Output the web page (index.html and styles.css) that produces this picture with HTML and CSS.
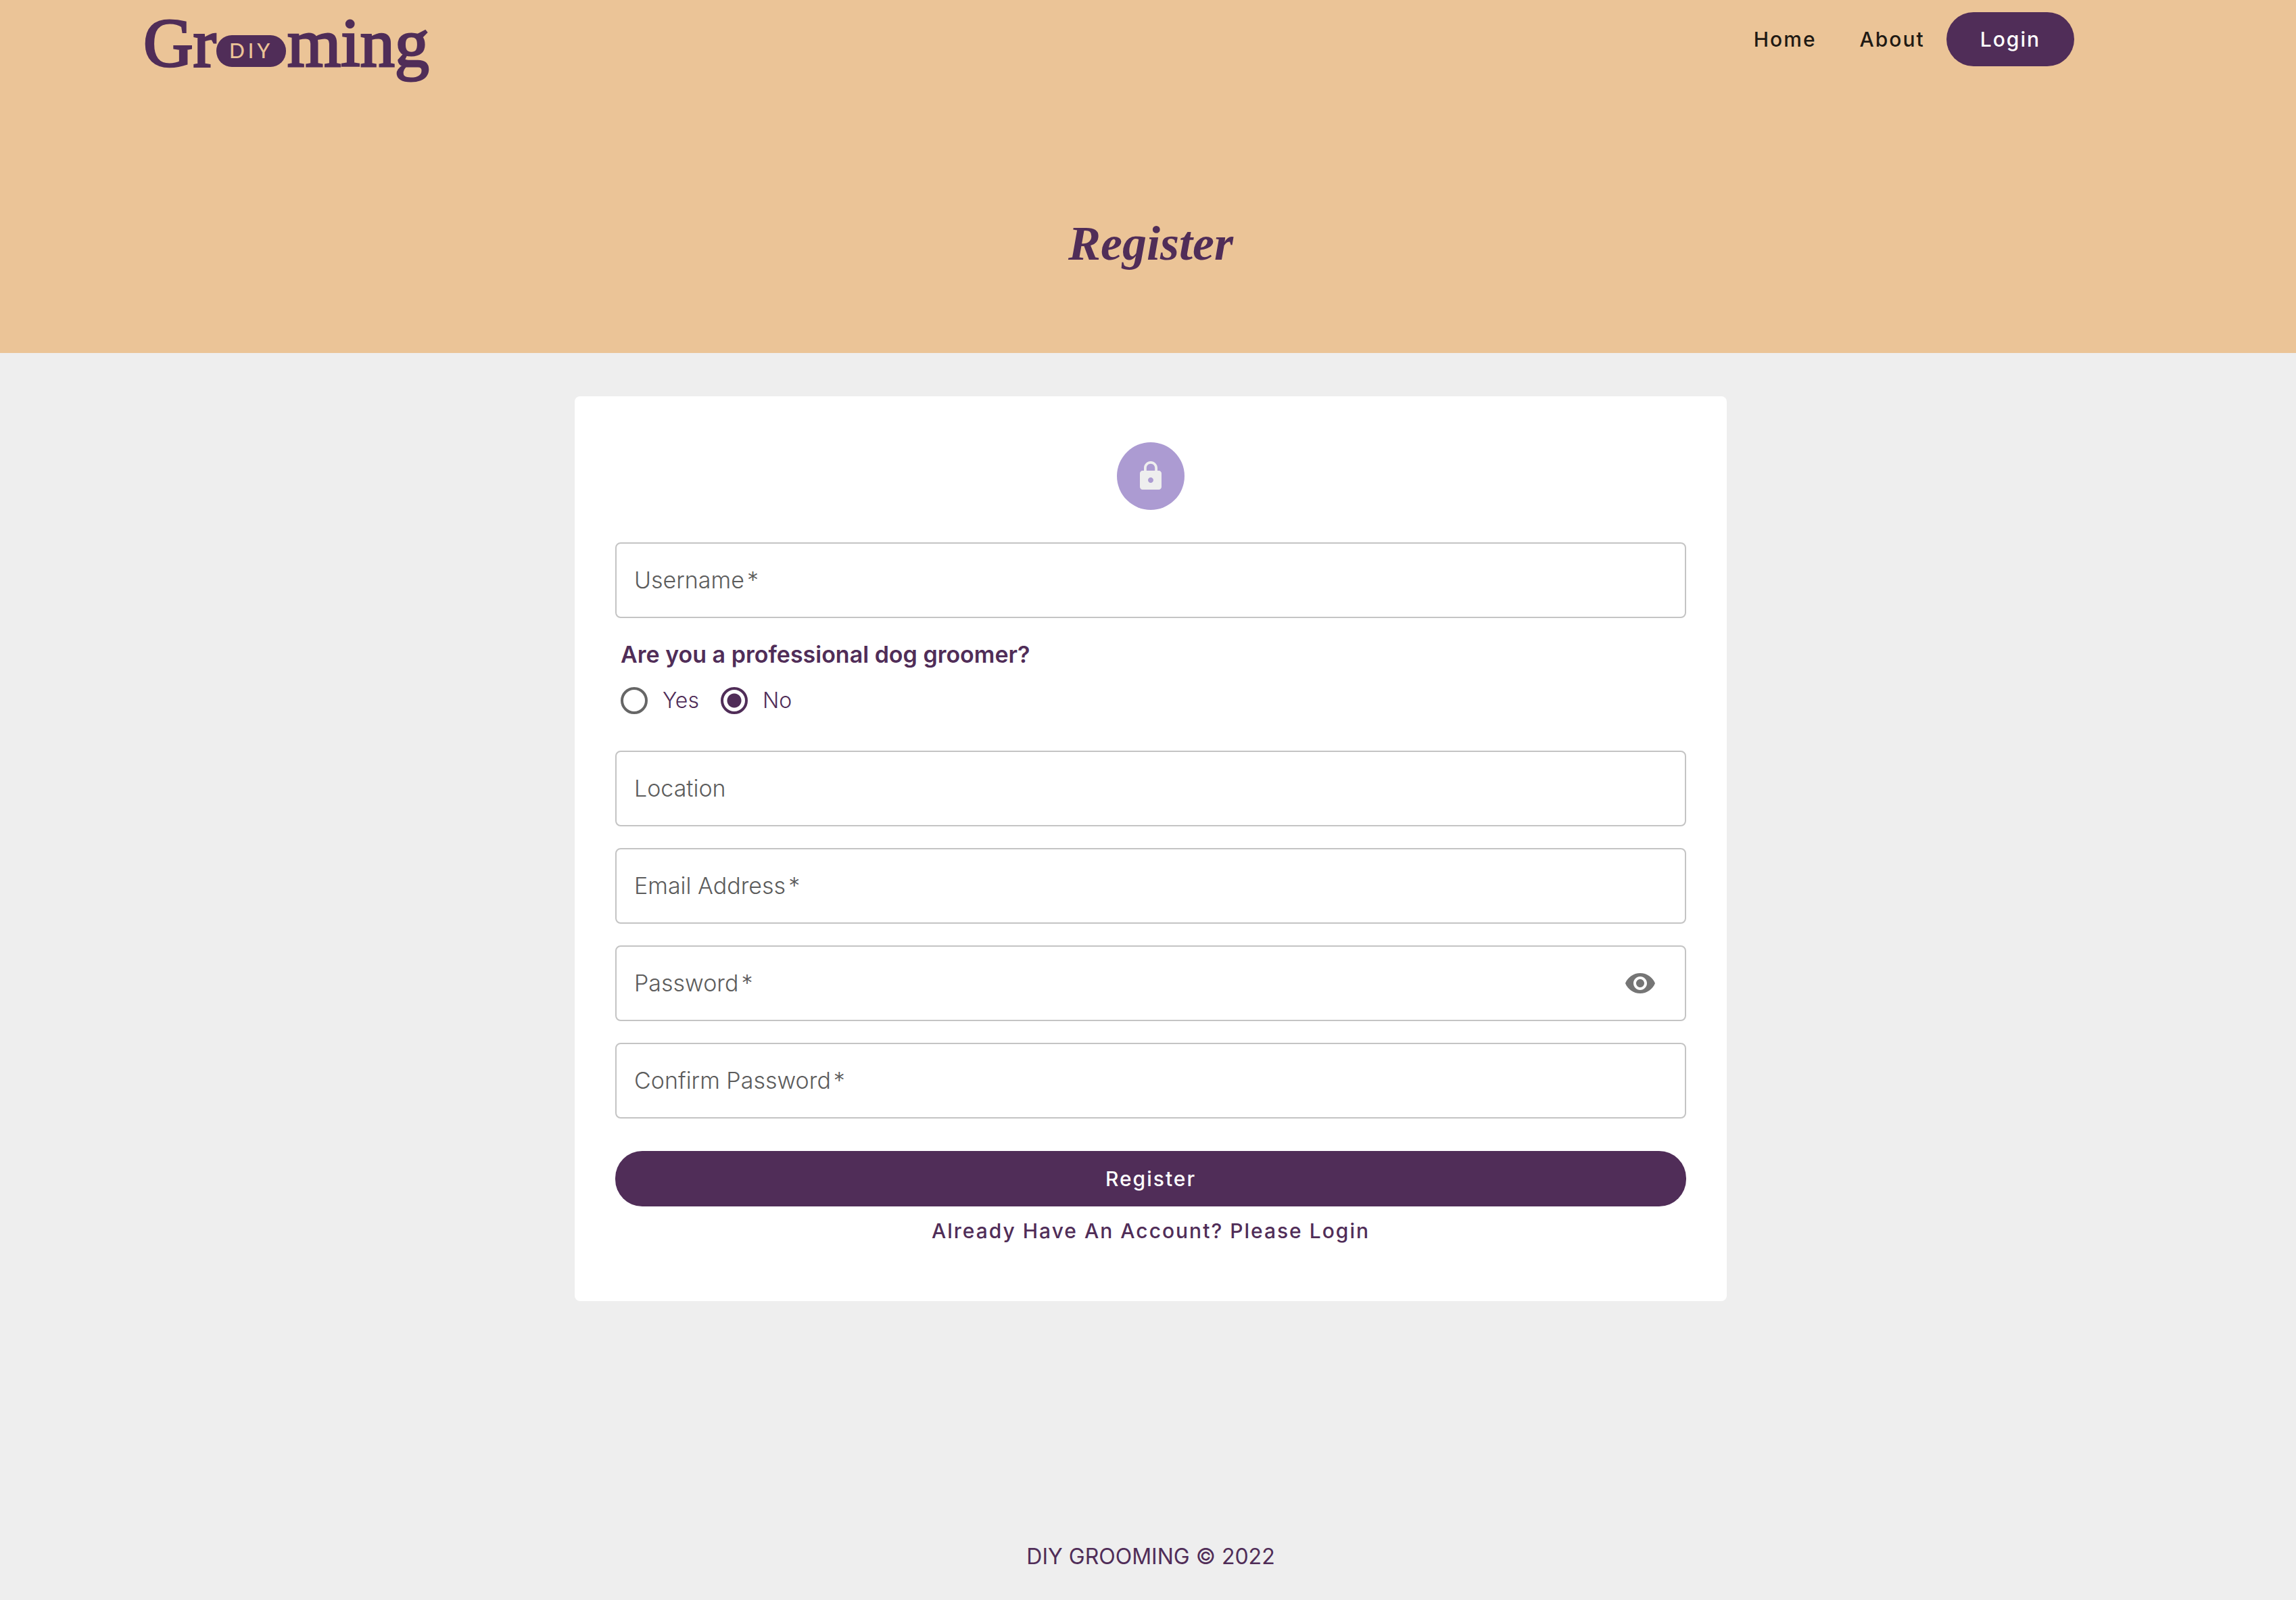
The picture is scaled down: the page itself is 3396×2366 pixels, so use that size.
FILE: index.html
```html
<!DOCTYPE html>
<html lang="en">
<head>
  <meta charset="utf-8">
  <meta name="viewport" content="width=device-width, initial-scale=1">
  <title>Register | DIY Grooming</title>
  <link rel="stylesheet" href="styles.css">
</head>
<body>
  <header class="hero">
    <div class="topbar">
      <a class="logo" href="#" aria-label="DIY Grooming">
        <svg width="440" height="128" viewBox="0 0 440 128" aria-hidden="true">
          <text class="logo-word" x="0" y="98">Gr</text>
          <rect class="logo-pill" x="108" y="52" width="103" height="47" rx="23"/>
          <text class="logo-diy" x="127" y="86">DIY</text>
          <text class="logo-word" x="213" y="98">ming</text>
        </svg>
      </a>
      <nav class="nav">
        <a class="nav-link" href="#">Home</a>
        <a class="nav-link" href="#">About</a>
        <button class="btn btn-login" type="button">Login</button>
      </nav>
    </div>
    <h1 class="title">Register</h1>
  </header>

  <main class="main">
    <form class="card">
      <div class="avatar">
        <svg width="48" height="48" viewBox="0 0 24 24" aria-hidden="true"><path fill="currentColor" d="M18 8h-1V6c0-2.760-2.240-5-5-5S7 3.240 7 6v2H6c-1.100 0-2 .9-2 2v10c0 1.100.9 2 2 2h12c1.100 0 2-.9 2-2V10c0-1.100-.9-2-2-2zm-6 9c-1.100 0-2-.9-2-2s.9-2 2-2 2 .9 2 2-.9 2-2 2zm3.100-9H8.900V6c0-1.710 1.390-3.100 3.100-3.100 1.710 0 3.100 1.390 3.100 3.100v2z"/></svg>
      </div>

      <div class="field">
        <label for="username">Username<span class="star">*</span></label>
        <input id="username" type="text" required>
      </div>

      <fieldset class="choice">
        <legend>Are you a professional dog groomer?</legend>
        <div class="options">
          <label class="option"><input type="radio" name="groomer" value="yes">Yes</label>
          <label class="option"><input type="radio" name="groomer" value="no" checked>No</label>
        </div>
      </fieldset>

      <div class="fields">
        <div class="field">
          <label for="location">Location</label>
          <input id="location" type="text">
        </div>
        <div class="field">
          <label for="email">Email Address<span class="star">*</span></label>
          <input id="email" type="email" required>
        </div>
        <div class="field">
          <label for="password">Password<span class="star">*</span></label>
          <input id="password" type="password" required>
          <button class="reveal" type="button" aria-label="Show password">
            <svg width="48" height="48" viewBox="0 0 24 24" aria-hidden="true"><path fill="currentColor" d="M12 4.500C7 4.500 2.730 7.610 1 12c1.730 4.390 6 7.500 11 7.500s9.270-3.110 11-7.500c-1.730-4.390-6-7.500-11-7.500zM12 17c-2.760 0-5-2.240-5-5s2.240-5 5-5 5 2.240 5 5-2.240 5-5 5zm0-8c-1.660 0-3 1.340-3 3s1.340 3 3 3 3-1.340 3-3-1.340-3-3-3z"/></svg>
          </button>
        </div>
        <div class="field">
          <label for="confirm">Confirm Password<span class="star">*</span></label>
          <input id="confirm" type="password" required>
        </div>
      </div>

      <button class="btn btn-submit" type="submit">Register</button>
      <a class="login-link" href="#">Already Have An Account? Please Login</a>
    </form>
  </main>

  <footer class="footer">DIY GROOMING © 2022</footer>
</body>
</html>
```

FILE: styles.css
```css
:root {
  --purple: #502d58;
  --tan: #ebc497;
  --grey: #eeeeee;
  --lilac: #ac9bd2;
}

* {
  box-sizing: border-box;
}

body {
  margin: 0;
  min-height: 100vh;
  display: flex;
  flex-direction: column;
  background: var(--grey);
  color: var(--purple);
  font-family: Inter, "Open Sans", sans-serif;
  font-size: 34px;
  font-weight: 300;
  line-height: 48px;
}

a {
  color: inherit;
  text-decoration: none;
}

button,
input {
  font: inherit;
}

/* Header */
.hero {
  background: var(--tan);
  padding-bottom: 114px;
}

.topbar {
  display: flex;
  justify-content: space-between;
  align-items: flex-start;
  padding: 0 328px 0 212px;
}

.logo svg {
  display: block;
  overflow: visible;
}

.logo-word {
  font: 102px "Liberation Serif", serif;
  fill: var(--purple);
  stroke: var(--purple);
  stroke-width: 3px;
}

.logo-pill {
  fill: var(--purple);
}

.logo-diy {
  font: 500 30px Lato, sans-serif;
  letter-spacing: 5px;
  fill: var(--tan);
}

.nav {
  display: flex;
  align-items: center;
  gap: 32px;
  padding-top: 18px;
}

.nav-link {
  padding-left: 32px;
  color: #1f1a14;
}

.nav-link,
.btn,
.login-link {
  font-size: 30px;
  font-weight: 500;
  line-height: 40px;
  letter-spacing: 2px;
}

.btn {
  border: 0;
  border-radius: 40px;
  background: var(--purple);
  color: #fff;
  cursor: pointer;
}

.btn-login {
  padding: 20px 50px;
}

.title {
  margin: 184px 0 0 8px;
  font: italic bold 72px/96px "Liberation Serif", serif;
  text-align: center;
}

/* Form card */
.main {
  flex: 1;
  padding: 64px 0 64px 8px;
}

.card {
  display: flex;
  flex-direction: column;
  max-width: 1704px;
  margin: 0 auto;
  padding: 68px 60px 84px;
  border-radius: 8px;
  background: #fff;
}

.avatar {
  display: grid;
  place-items: center;
  align-self: center;
  width: 100px;
  height: 100px;
  margin-bottom: 48px;
  border-radius: 50%;
  background: var(--lilac);
  color: var(--grey);
}

.fields {
  display: grid;
  gap: 32px;
}

.field {
  display: grid;
  grid-template-columns: 1fr auto;
  align-items: center;
  height: 112px;
  border: 2px solid #c4c4c4;
  border-radius: 8px;
}

.field label {
  grid-area: 1 / 1;
  padding-left: 26px;
  color: #5c5c5c;
  pointer-events: none;
}

.field input {
  grid-area: 1 / 1;
  width: 100%;
  height: 100%;
  padding: 0 26px;
  border: 0;
  outline: 0;
  background: transparent;
}

.field:focus-within {
  border-color: var(--purple);
}

.star {
  padding-left: 4px;
}

.reveal {
  display: grid;
  margin-right: 42px;
  padding: 0;
  border: 0;
  background: none;
  color: #757575;
  cursor: pointer;
}

.choice {
  margin: 30px 0 54px;
  padding: 0 8px;
  border: 0;
}

.choice legend {
  padding: 0;
  font-weight: 600;
}

.options {
  display: flex;
  gap: 32px;
  padding-top: 24px;
}

.option {
  display: flex;
  align-items: center;
  gap: 22px;
  font-size: 32px;
  line-height: 40px;
}

.option input {
  appearance: none;
  width: 40px;
  height: 40px;
  margin: 0;
  border: 4px solid #666;
  border-radius: 50%;
}

.option input:checked {
  border-color: var(--purple);
  background: radial-gradient(circle, var(--purple) 10px, transparent 11px);
}

.btn-submit {
  margin: 48px 0 16px;
  padding: 21px 32px;
}

.login-link {
  align-self: center;
}

/* Footer */
.footer {
  padding: 0 0 40px 8px;
  font-size: 32px;
  font-weight: 400;
  text-align: center;
}
```
